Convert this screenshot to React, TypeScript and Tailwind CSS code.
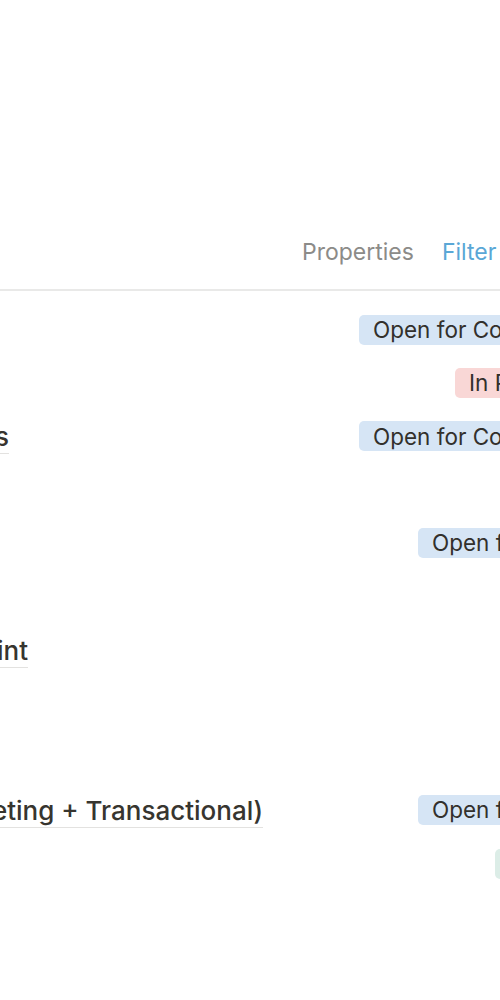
import React from "react";

type Row = {
  title?: string;
  titleEnd?: number;
  tagX?: number;
  tag?: string;
  color?: string;
};

const BLUE = "bg-[#d6e5f5]";
const RED = "bg-[#f9d7d6]";
const GREEN = "bg-[#dcede7]";

const rows: Row[] = [
  { tagX: 359, tag: "Open for Comment", color: BLUE },
  { tagX: 455, tag: "In Progress", color: RED },
  { title: "Email Campaigns", titleEnd: 9, tagX: 359, tag: "Open for Comment", color: BLUE },
  {},
  { tagX: 418, tag: "Open for Comment", color: BLUE },
  {},
  { title: "Pre-Launch Sprint", titleEnd: 28 },
  {},
  {},
  { title: "Email Templates (Marketing + Transactional)", titleEnd: 263, tagX: 418, tag: "Open for Comment", color: BLUE },
  { tagX: 495, tag: "Done", color: GREEN },
  {},
  {},
];

export default function App() {
  return (
    <div
      className="w-[500px] h-[1000px] overflow-hidden bg-white text-[#37352f]"
      style={{ fontFamily: "Inter, 'Noto Sans', 'Liberation Sans', sans-serif" }}
    >
      <div className="h-[230px]" />
      <div className="h-[44px] flex items-center whitespace-nowrap">
        <span className="ml-[302px] text-[23px] text-[#8c8b88]">Properties</span>
        <span className="ml-[28px] text-[23px] text-[#5aa7d6]">Filter</span>
      </div>
      <div className="h-[15px]" />
      <div className="h-[2px] bg-[#e9e9e8]" />
      <div className="pt-[12px]">
        {rows.map((r, i) => (
          <div key={i} className="h-[53.4px] flex items-center whitespace-nowrap relative">
            {r.title ? (
              <div
                className="flex justify-end shrink-0"
                style={{ width: r.titleEnd }}
              >
                <span className="shrink-0 text-[26px] font-medium leading-[31px] border-b-[1.5px] border-[#e3e2e0] pb-[1px] translate-y-[1px]">
                  {r.title}
                </span>
              </div>
            ) : null}
            {r.tag ? (
              <div
                className="absolute top-1/2 -translate-y-1/2"
                style={{ left: r.tagX }}
              >
                <span
                  className={`inline-flex items-center h-[30px] rounded-[5px] px-[14px] text-[22.5px] text-[#32302c] ${r.color}`}
                >
                  {r.tag}
                </span>
              </div>
            ) : null}
          </div>
        ))}
      </div>
    </div>
  );
}
